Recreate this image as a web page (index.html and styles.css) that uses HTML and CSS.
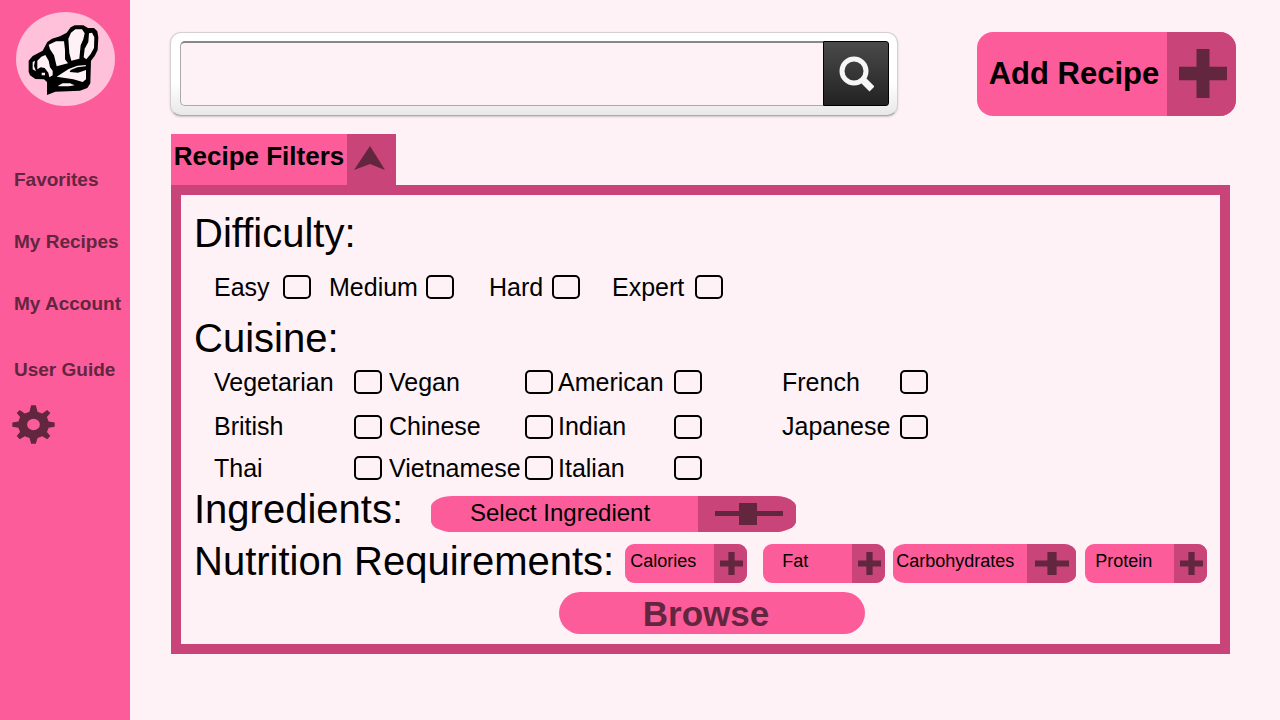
FILE: index.html
```html
<!DOCTYPE html>
<html lang="en">
<head>
<meta charset="utf-8">
<meta name="viewport" content="width=device-width, initial-scale=1">
<title>Recipes</title>
<link rel="stylesheet" href="styles.css">
</head>
<body>
<svg class="sprite" aria-hidden="true">
  <symbol id="plus" viewBox="0 0 48 48" preserveAspectRatio="none"><path d="M17.500 0h13v17.500H48v13H30.500V48h-13V30.500H0v-13h17.500z"/></symbol>
</svg>
<div class="layout">
  <aside class="sidebar">
    <a class="logo" href="#" aria-label="Home">
      <svg viewBox="48 36 297 282" aria-hidden="true">
        <ellipse class="logo-disc" cx="196.500" cy="177" rx="148.500" ry="141"/>
        <path d="M141 285V246L132 238 106 237 90 226 86 215V182L98 168 128 152 142 126 156 116 180 109 200 98 212 82 224 76H250L264 84H282L292 94 295 112 293 150 284 168 273 182 271 250 262 264 240 272 166 275z"/>
        <path class="hat-fill" d="M146 134L168 124H192L195 150V178L204 190 170 199 162 166 150 148z"/>
        <path class="hat-fill" d="M205 116L213 98 226 88H246L254 100 250 118 242 136 238 176 214 182 208 160z"/>
        <path class="hat-fill" d="M267 100L276 98 283 112 282 144 272 162 259 178 251 172 254 146 265 126z"/>
        <path class="hat-fill" d="M112 182L124 170 136 165 146 182 150 202 158 212V226L148 232 145 218 134 204 122 202 112 208z"/>
        <path class="hat-fill" d="M98 186L105 182 102 198 108 214 98 208zM125 218h10v8h-10z"/>
        <path class="hat-fill" d="M170 230L206 207 232 197 258 195 257 199 232 202 212 210 209 216 234 218 258 210V238L248 246 220 238z"/>
        <path class="hat-fill" d="M174 257L188 250H210L224 256 206 259H176z"/>
      </svg>
    </a>
    <nav class="nav">
      <a href="#">Favorites</a>
      <a href="#">My Recipes</a>
      <a href="#">My Account</a>
    </nav>
    <div class="support">
      <a href="#">User Guide</a>
      <button class="settings" type="button" aria-label="Settings">
        <svg viewBox="-64 -58 128 116" preserveAspectRatio="none" aria-hidden="true">
          <path fill-rule="evenodd" d="M-7-57H7L12-38 26-33 41-43 50-34 40-22 45-9 63-6V7L45 10 40 22 50 34 41 44 26 35 12 40 7 57H-7L-12 40-26 35-41 44-50 34-40 22-45 10-63 7V-6L-45-9-40-22-50-34-41-43-26-33-12-38zM0-17A19 17 0 1 0 0 17A19 17 0 1 0 0-17z"/>
        </svg>
      </button>
    </div>
  </aside>

  <main class="main">
    <header class="topbar">
      <form class="search" role="search">
        <input class="search-input" type="text" aria-label="Search recipes">
        <button class="search-button" type="button" aria-label="Search">
          <svg viewBox="0 0 36 36" aria-hidden="true"><circle cx="16" cy="15" r="12"/><path class="handle" d="M25 24l9 9"/></svg>
        </button>
      </form>
      <button class="add" type="button">
        <span class="add-label">Add Recipe</span>
        <span class="add-icon"><svg aria-hidden="true"><use href="#plus"/></svg></span>
      </button>
    </header>

    <section class="filters">
      <button class="tab" type="button" aria-expanded="true">
        <span class="tab-label">Recipe Filters</span>
        <span class="tab-icon"><svg viewBox="0 0 31 24" aria-hidden="true"><path d="M16 0L31 24 16 18 0 24z"/></svg></span>
      </button>
      <div class="panel">
        <h2>Difficulty:</h2>
        <div class="difficulty">
          <label for="easy">Easy</label><input type="checkbox" id="easy">
          <label for="medium">Medium</label><input type="checkbox" id="medium">
          <label for="hard">Hard</label><input type="checkbox" id="hard">
          <label for="expert">Expert</label><input type="checkbox" id="expert">
        </div>
        <h2>Cuisine:</h2>
        <div class="cuisine">
          <label for="vegetarian">Vegetarian</label><input type="checkbox" id="vegetarian">
          <label for="vegan">Vegan</label><input type="checkbox" id="vegan">
          <label for="american">American</label><input type="checkbox" id="american">
          <label for="french">French</label><input type="checkbox" id="french">
          <label for="british">British</label><input type="checkbox" id="british">
          <label for="chinese">Chinese</label><input type="checkbox" id="chinese">
          <label for="indian">Indian</label><input type="checkbox" id="indian">
          <label for="japanese">Japanese</label><input type="checkbox" id="japanese">
          <label for="thai">Thai</label><input type="checkbox" id="thai">
          <label for="vietnamese">Vietnamese</label><input type="checkbox" id="vietnamese">
          <label for="italian">Italian</label><input type="checkbox" id="italian">
        </div>
        <div class="ingredients">
          <h2>Ingredients:</h2>
          <button class="select" type="button">
            <span class="select-label">Select Ingredient</span>
            <span class="select-icon"><svg viewBox="0 0 68 22" aria-hidden="true"><path d="M0 8h24V0h18v8h26v5H42v9H24v-9H0z"/></svg></span>
          </button>
        </div>
        <div class="nutrition">
          <h2>Nutrition Requirements:</h2>
          <div class="nutrients">
            <button class="nutrient" type="button"><span class="nutrient-label">Calories</span><span class="nutrient-icon"><svg aria-hidden="true"><use href="#plus"/></svg></span></button>
            <button class="nutrient nutrient-fat" type="button"><span class="nutrient-label">Fat</span><span class="nutrient-icon"><svg aria-hidden="true"><use href="#plus"/></svg></span></button>
            <button class="nutrient nutrient-wide" type="button"><span class="nutrient-label">Carbohydrates</span><span class="nutrient-icon"><svg aria-hidden="true"><use href="#plus"/></svg></span></button>
            <button class="nutrient nutrient-protein" type="button"><span class="nutrient-label">Protein</span><span class="nutrient-icon"><svg aria-hidden="true"><use href="#plus"/></svg></span></button>
          </div>
        </div>
        <button class="browse" type="button">Browse</button>
      </div>
    </section>
  </main>
</div>
</body>
</html>
```
FILE: styles.css
```css
:root {
  --pink: #fd5c9b;
  --rose: #c94479;
  --plum: #62263f;
  --blush: #fff2f6;
}

* { box-sizing: border-box; }

body {
  margin: 0;
  background: var(--blush);
  color: #000;
  font-family: "Liberation Sans", Arial, sans-serif;
}

button {
  margin: 0;
  padding: 0;
  border: 0;
  background: none;
  color: inherit;
  font: inherit;
  cursor: pointer;
}

svg { display: block; }

.sprite { display: none; }

.layout { display: flex; min-height: 100vh; }

/* Sidebar */
.sidebar {
  flex: none;
  width: 130px;
  padding-top: 12px;
  background: var(--pink);
  color: var(--plum);
  fill: var(--plum);
  font-size: 19px;
  font-weight: bold;
  line-height: 22px;
  white-space: nowrap;
}

.sidebar a { color: inherit; text-decoration: none; }

.logo { display: block; width: 99px; margin-left: 16px; }
.logo svg { fill: #000; }
.logo-disc { fill: #ffc0da; }
.hat-fill { fill: var(--blush); }

.nav {
  display: flex;
  flex-direction: column;
  gap: 40px;
  margin-top: 63px;
  padding-left: 14px;
}

.support { margin-top: 44px; padding-left: 14px; }

.settings {
  display: block;
  width: 43px;
  height: 39px;
  margin-top: 24px;
  margin-left: -2px;
}

.settings svg { width: 100%; height: 100%; }

/* Top bar */
.main { flex: 1; min-width: 0; padding: 32px 44px 32px 40px; }

.topbar { display: flex; gap: 79px; }

.search {
  display: flex;
  flex: 1;
  min-width: 0;
  height: 84px;
  padding: 8px 8px 9px 9px;
  border: 1px solid #d4d0d2;
  border-bottom-color: #aaa;
  border-radius: 11px;
  background: linear-gradient(#fff 60%, #e8e8e8);
  box-shadow: 0 1px 2px #c8c4c6;
}

.search-input {
  flex: 1;
  min-width: 0;
  padding: 0 12px;
  border: 1px solid #aaa;
  border-top: 2px solid #888;
  border-right: 0;
  border-radius: 5px 0 0 5px;
  background: var(--blush);
  font: 25px "Liberation Sans", Arial, sans-serif;
}

.search-button {
  display: flex;
  align-items: center;
  justify-content: center;
  width: 66px;
  border: 1px solid #000;
  border-radius: 0 3px 3px 0;
  background: linear-gradient(#4a4a4a, #222);
}

.search-button svg {
  width: 36px;
  fill: none;
  stroke: #f6f6f6;
  stroke-width: 5;
}

.search-button .handle { stroke-width: 7; }

.add {
  display: flex;
  width: 259px;
  height: 84px;
  overflow: hidden;
  border-radius: 16px;
  background: var(--pink);
  font-size: 31px;
  font-weight: bold;
  white-space: nowrap;
}

.add-label { flex: 1; align-self: center; padding-left: 4px; }

.add-icon, .tab-icon, .select-icon, .nutrient-icon {
  display: flex;
  flex: none;
  align-self: stretch;
  align-items: center;
  justify-content: center;
  background: var(--rose);
  fill: var(--plum);
}

.add-icon { width: 69px; padding: 0 0 1px 3px; }
.add-icon svg { width: 48px; height: 49px; }

/* Filters */
.filters { margin: 18px 6px 0 1px; }

.tab {
  display: flex;
  width: 225px;
  height: 51px;
  background: var(--pink);
  font-size: 26px;
  font-weight: bold;
  white-space: nowrap;
}

.tab-label { flex: 1; align-self: center; padding-bottom: 7px; }
.tab-icon { width: 49px; padding: 0 4px 4px 0; }
.tab-icon svg { width: 31px; height: 24px; }

.panel {
  padding: 16px 12px 10px 13px;
  border: 10px solid var(--rose);
  font-size: 25px;
}

h2 {
  margin: 0;
  font-size: 40px;
  font-weight: normal;
  line-height: 44px;
  white-space: nowrap;
}

.difficulty, .cuisine {
  display: grid;
  align-items: center;
  padding-left: 20px;
  white-space: nowrap;
}

.difficulty {
  grid-template-columns: 69px 46px 97px 63px 63px 60px 83px 28px;
  grid-template-rows: 46px;
  margin: 9px 0 6px;
}

.cuisine {
  grid-template-columns: 140px 35px 136px 33px 116px 108px 118px 28px;
  grid-template-rows: 44px 45px 38px;
}

input[type="checkbox"] {
  appearance: none;
  width: 28px;
  height: 24px;
  margin: 0;
  border: 2px solid #000;
  border-radius: 5px;
}

input[type="checkbox"]:checked { background: var(--rose); }

.ingredients { display: flex; align-items: flex-end; gap: 28px; height: 45px; }
.ingredients h2 { align-self: flex-start; }

.select {
  display: flex;
  width: 365px;
  height: 36px;
  overflow: hidden;
  border-radius: 22px / 11px;
  background: var(--pink);
  font-size: 24px;
  white-space: nowrap;
}

.select-label { flex: 1; align-self: center; padding: 0 9px 2px 0; }
.select-icon { width: 98px; padding-left: 3px; }
.select-icon svg { width: 68px; height: 22px; }

.nutrition { display: flex; align-items: flex-end; gap: 11px; margin-top: 7px; }

.nutrients { display: grid; grid-template-columns: 138px 130px 192px 122px; }

.nutrient {
  display: flex;
  width: 122px;
  height: 39px;
  overflow: hidden;
  border-radius: 9px;
  background: var(--pink);
  font-size: 18px;
  text-align: left;
  white-space: nowrap;
}

.nutrient-label { flex: 1; align-self: center; padding: 0 0 4px 5px; }
.nutrient-icon { width: 33px; padding-left: 1px; }
.nutrient-icon svg { width: 23px; height: 23px; }

.nutrient-fat .nutrient-label { padding-left: 19px; }
.nutrient-protein .nutrient-label { padding-left: 10px; }
.nutrient-wide { width: 183px; border-radius: 12px / 9px; }
.nutrient-wide .nutrient-label { padding-left: 3px; }
.nutrient-wide .nutrient-icon { width: 49px; }
.nutrient-wide .nutrient-icon svg { width: 34px; }

.browse {
  display: block;
  width: 306px;
  height: 42px;
  margin: 9px 0 0 365px;
  padding-right: 12px;
  border-radius: 21px;
  background: var(--pink);
  color: var(--plum);
  font-size: 35px;
  font-weight: bold;
  line-height: 44px;
}
```
